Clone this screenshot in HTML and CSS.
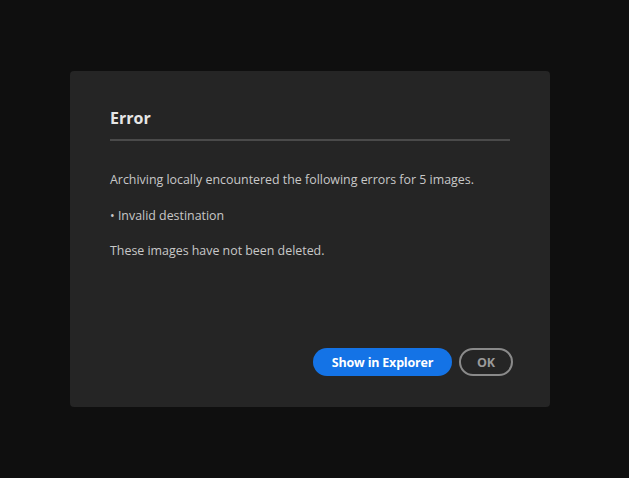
FILE: index.html
```html
<!DOCTYPE html>
<html>
<head>
<meta charset="utf-8">
<link rel="stylesheet" href="styles.css">
</head>
<body>
<div class="dialog">
  <h1 class="title">Error</h1>
  <div class="divider"></div>
  <div class="content">
    <p>Archiving locally encountered the following errors for 5 images.</p>
    <p>• Invalid destination</p>
    <p>These images have not been deleted.</p>
  </div>
  <div class="actions">
    <button class="btn primary">Show in Explorer</button>
    <button class="btn secondary">OK</button>
  </div>
</div>
</body>
</html>
```
FILE: styles.css
```css
html, body {
  margin: 0;
  padding: 0;
  background: #0f0f0f;
  width: 629px;
  height: 478px;
  overflow: hidden;
}
body {
  font-family: "Open Sans", "Noto Sans", sans-serif;
  padding-top: 71px;
  padding-left: 70px;
  box-sizing: border-box;
}
.dialog {
  width: 480px;
  height: 336px;
  background: #252525;
  border-radius: 4px;
  box-sizing: border-box;
  padding: 36px 37px 31px 40px;
  display: flex;
  flex-direction: column;
}
.title {
  margin: 0;
  font-size: 16px;
  font-weight: 700;
  color: #e6e6e6;
  line-height: 22px;
  width: 400px;
}
.divider {
  width: 400px;
  height: 2px;
  background: #4a4a4a;
  margin-top: 10px;
}
.content {
  margin-top: 30px;
  color: #c8c8c8;
  font-size: 12.4px;
  flex: 1;
}
.content p {
  margin: 0 0 17px 0;
  line-height: 18.5px;
  white-space: nowrap;
}
.actions {
  display: flex;
  justify-content: flex-end;
  gap: 7px;
}
.btn {
  height: 28px;
  border-radius: 14px;
  font-family: inherit;
  font-size: 12.5px;
  font-weight: 700;
  box-sizing: border-box;
  padding: 0;
  white-space: nowrap;
  cursor: pointer;
}
.primary {
  background: #1473e6;
  color: #ffffff;
  border: none;
  width: 139px;
  letter-spacing: -0.2px;
}
.secondary {
  background: transparent;
  border: 2px solid #8a8a8a;
  color: #9a9a9a;
  width: 54px;
}
```
